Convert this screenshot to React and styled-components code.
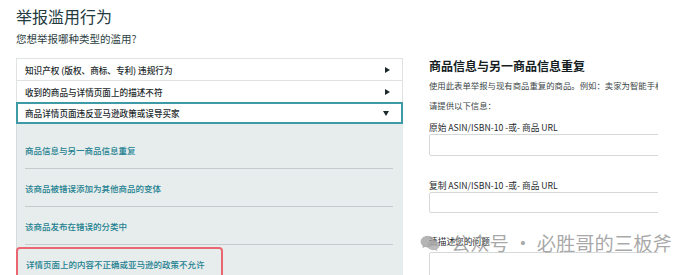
import React from 'react';
import styled, { createGlobalStyle } from 'styled-components';

const GlobalStyle = createGlobalStyle`
  body {
    margin: 0;
    background: #fff;
    font-family: "Noto Sans CJK SC", "Noto Sans", sans-serif;
  }
`;

const Page = styled.div`
  position: relative;
  display: flex;
  width: 692px;
  height: 275px;
  overflow: hidden;
  background: #fff;
`;

const Left = styled.div`
  width: 387px;
  margin-left: 16px;
  flex-shrink: 0;
`;

const Title = styled.h1`
  margin: 3px 0 0 0;
  font-size: 16px;
  line-height: 26px;
  font-weight: 400;
  color: #233a3f;
`;

const Subtitle = styled.p`
  margin: 3px 0 0 0;
  font-size: 10.5px;
  line-height: 14px;
  color: #2c3e42;
`;

const Accordion = styled.div`
  margin-top: 12px;
`;

const Row = styled.div`
  box-sizing: border-box;
  height: 22px;
  display: flex;
  align-items: center;
  justify-content: space-between;
  padding: 0 12px 0 ${(p) => (p.open ? '7px' : '8px')};
  font-size: 8.6px;
  font-weight: 500;
  color: #1d2a2c;
  background: #fff;
  border: ${(p) => (p.open ? '2px solid #3e9aa6' : '1px solid #dfe3e3')};
  border-bottom: ${(p) => (p.open ? '2px solid #3e9aa6' : 'none')};
`;

const Arrow = styled.span`
  width: 0;
  height: 0;
  border-style: solid;
  ${(p) =>
    p.down
      ? 'border-width: 5px 3.5px 0 3.5px; border-color: #1d2a2c transparent transparent transparent;'
      : 'border-width: 3.5px 0 3.5px 5px; border-color: transparent transparent transparent #1d2a2c;'}
`;

const Panel = styled.div`
  background: #e7eded;
  border-left: 1px solid #d3dcdc;
  padding-top: 7px;
  height: 200px;
`;

const Item = styled.div`
  box-sizing: border-box;
  height: 38px;
  margin: 0 10px 0 8px;
  display: flex;
  align-items: center;
  font-size: 8.5px;
  font-weight: 500;
  color: #21808f;
  border-bottom: 1px solid #c4cdcd;
`;

const Highlight = styled.div`
  box-sizing: border-box;
  width: 207px;
  height: 40px;
  margin: 2px 0 0 -1px;
  padding: 0 0 6px 8px;
  display: flex;
  align-items: center;
  font-size: 8.5px;
  font-weight: 500;
  color: #21808f;
  border: 2px solid #ea6670;
  border-radius: 4px;
`;

const Right = styled.div`
  width: 229px;
  margin-left: 26px;
  padding-top: 57px;
  overflow: hidden;
  white-space: nowrap;
  flex-shrink: 0;
`;

const Heading = styled.h2`
  margin: 0;
  font-size: 12px;
  line-height: 18px;
  font-weight: 700;
  color: #151d1f;
`;

const Text = styled.p`
  margin: ${(p) => p.mt || 0}px 0 0 0;
  font-size: ${(p) => (p.label ? '8.7px' : '8.4px')};
  line-height: 12px;
  color: ${(p) => (p.label ? '#1f2a2c' : '#3c4648')};
`;

const Input = styled.div`
  box-sizing: border-box;
  width: 240px;
  height: ${(p) => p.h}px;
  margin-top: ${(p) => p.mt}px;
  border: 1px solid #d5d9d9;
  border-radius: 2px;
  background: #fff;
`;

const Watermark = styled.div`
  position: absolute;
  left: 420px;
  top: 230px;
  display: flex;
  align-items: center;
  gap: 11px;
  white-space: nowrap;
  font-size: 19.3px;
  line-height: 26px;
  color: rgba(140, 140, 140, 0.75);
  pointer-events: none;
`;

const WeChatIcon = () => (
  <svg width="20" height="17" viewBox="0 0 21 18">
    <ellipse cx="8" cy="7" rx="7.5" ry="6.2" fill="rgba(150,150,150,0.7)" />
    <path d="M3 11 L2.5 14 L6 12 Z" fill="rgba(150,150,150,0.7)" />
    <ellipse cx="14" cy="11" rx="6.5" ry="5.2" fill="rgba(170,170,170,0.8)" />
    <path d="M17.5 14.5 L18.5 17.2 L15.5 15.6 Z" fill="rgba(170,170,170,0.8)" />
  </svg>
);

export default function App() {
  return (
    <>
      <GlobalStyle />
      <Page>
        <Left>
          <Title>举报滥用行为</Title>
          <Subtitle>您想举报哪种类型的滥用?</Subtitle>
          <Accordion>
            <Row>
              知识产权 (版权、商标、专利) 违规行为
              <Arrow />
            </Row>
            <Row>
              收到的商品与详情页面上的描述不符
              <Arrow />
            </Row>
            <Row open>
              商品详情页面违反亚马逊政策或误导买家
              <Arrow down />
            </Row>
            <Panel>
              <Item>商品信息与另一商品信息重复</Item>
              <Item>该商品被错误添加为其他商品的变体</Item>
              <Item>该商品发布在错误的分类中</Item>
              <Highlight>详情页面上的内容不正确或亚马逊的政策不允许</Highlight>
            </Panel>
          </Accordion>
        </Left>
        <Right>
          <Heading>商品信息与另一商品信息重复</Heading>
          <Text mt={4}>使用此表单举报与现有商品重复的商品。例如：卖家为智能手机创建了</Text>
          <Text mt={8}>请提供以下信息：</Text>
          <Text label mt={11}>原始 ASIN/ISBN-10 -或- 商品 URL</Text>
          <Input h={22} mt={0} />
          <Text label mt={24}>复制 ASIN/ISBN-10 -或- 商品 URL</Text>
          <Input h={21} mt={0} />
          <Text label mt={23}>请描述您的问题</Text>
          <Input h={40} mt={4} />
        </Right>
        <Watermark>
          <WeChatIcon />
          <span>公众号 · 必胜哥的三板斧</span>
        </Watermark>
      </Page>
    </>
  );
}
